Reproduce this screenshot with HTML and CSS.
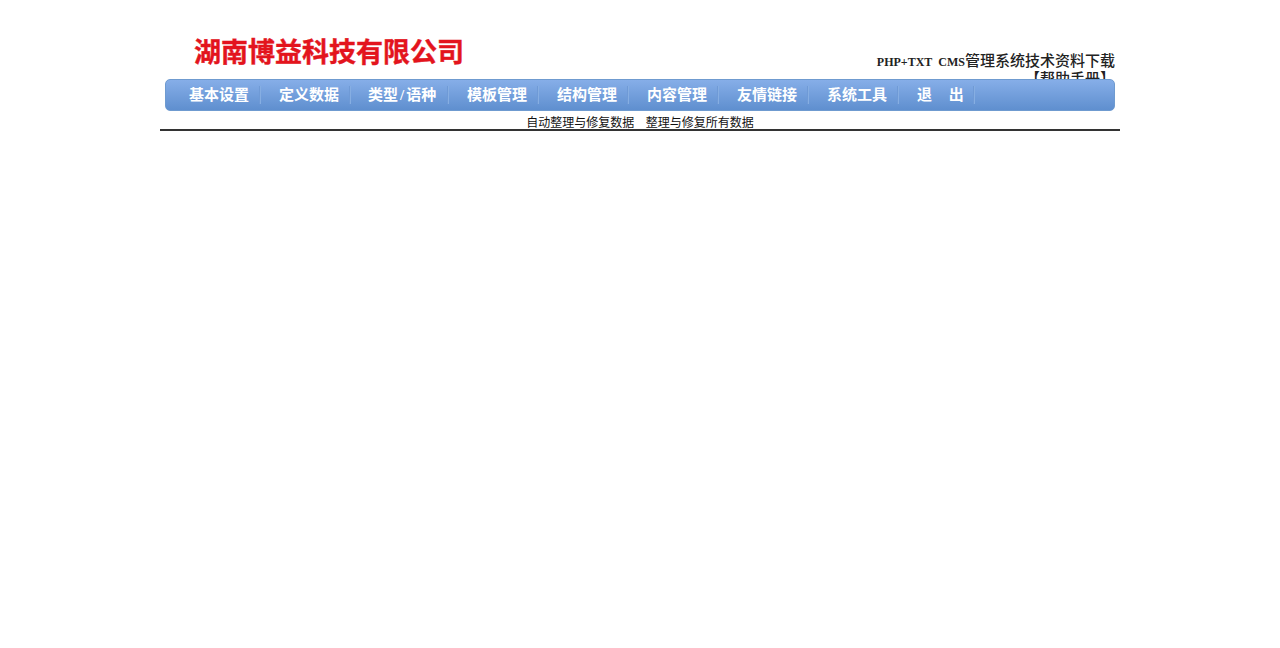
FILE: index.html
```html
<!DOCTYPE html>
<html lang="zh-CN">
<head>
    <meta charset="UTF-8">
    <title>湖南博益科技有限公司</title>
    <link rel="stylesheet" href="styles.css">
</head>
<body>
    <div id="wrap">
        <div class="top">
            <div class="logo">湖南博益科技有限公司</div>
            <div class="links">
                <a href="#"><span class="latin">PHP+TXT&nbsp;&nbsp;CMS</span>管理系统技术资料下载</a><br>
                <a href="#">【帮助手册】</a>
            </div>
        </div>
        <div class="nav">
            <a href="#">基本设置</a>
            <a href="#">定义数据</a>
            <a href="#" class="wide">类型<span class="latin">/</span>语种</a>
            <a href="#">模板管理</a>
            <a href="#">结构管理</a>
            <a href="#">内容管理</a>
            <a href="#">友情链接</a>
            <a href="#">系统工具</a>
            <a href="#" class="exit">退&nbsp;&nbsp;&nbsp;&nbsp;出</a>
        </div>
        <div class="subnav">
            <a href="#">自动整理与修复数据</a>
            <a href="#">整理与修复所有数据</a>
        </div>
    </div>
</body>
</html>
```

FILE: styles.css
```css
body {
    margin: 0;
    background: #fff;
    font-family: "Liberation Sans", "Noto Sans CJK SC", sans-serif;
    font-size: 12px;
    color: #000;
}
a {
    color: inherit;
    text-decoration: none;
}
#wrap {
    width: 960px;
    margin: 0 auto;
}
.top {
    height: 79px;
    display: flex;
    justify-content: space-between;
    padding: 0 5px 0 34px;
    overflow: hidden;
}
.logo {
    margin-top: 34px;
    font-size: 27px;
    line-height: 38px;
    font-weight: bold;
    color: #e3141d;
    -webkit-text-stroke: 0.4px #e3141d;
}
.links {
    margin-top: 52px;
    width: 260px;
    text-align: right;
    font-family: "Noto Sans CJK SC", serif;
    font-size: 15px;
    line-height: 16px;
    font-weight: 500;
    color: #222;
}
.latin {
    font-family: "Liberation Serif", serif;
    font-size: 12px;
    font-weight: bold;
}
.nav {
    height: 30px;
    margin: 0 5px;
    padding-left: 4px;
    display: flex;
    align-items: center;
    border: 1px solid #6f9bd0;
    border-radius: 5px;
    background: linear-gradient(#86aee8, #5f8fcf);
}
.nav a {
    width: 70px;
    height: 18px;
    padding-left: 19px;
    border-right: 1px solid #6f9ad6;
    box-shadow: 1px 0 0 #86aee2;
    font-size: 15px;
    line-height: 18px;
    font-weight: bold;
    color: #fff;
    white-space: nowrap;
}
.nav a.wide {
    width: 79px;
    padding-left: 18px;
}
.nav a.wide .latin {
    font-size: 15px;
    margin: 0 2px;
}
.nav a.exit {
    width: 56px;
}
.subnav {
    height: 18px;
    border-bottom: 2px solid #333;
    text-align: center;
    line-height: 25px;
    color: #111;
}
.subnav a {
    margin: 0 4px;
}
```
